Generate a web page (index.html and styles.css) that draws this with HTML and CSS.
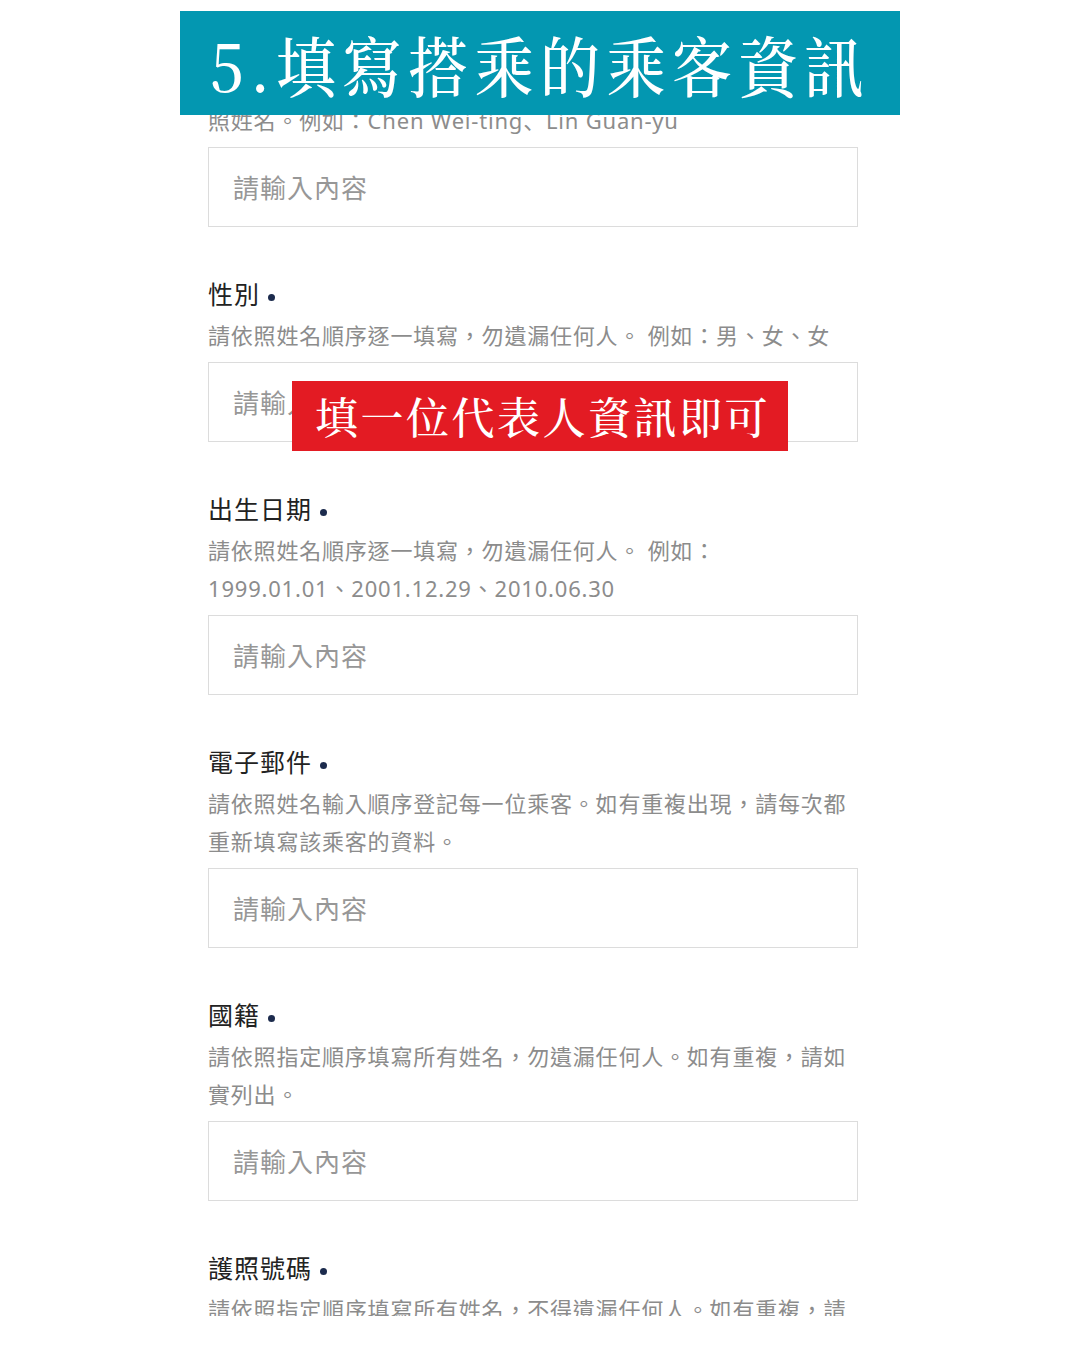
FILE: index.html
```html
<!DOCTYPE html>
<html lang="zh-Hant">
<head>
  <meta charset="UTF-8" />
  <meta name="viewport" content="width=device-width, initial-scale=1.0"/>
  <title>填寫搭乘的乘客資訊</title>
  <link rel="stylesheet" href="styles.css">
</head>
<body>

  <div class="screen">
    <h1 class="step-title"><span>5.填寫搭乘的乘客資訊</span></h1>

    <div class="note">填一位代表人資訊即可</div>

    <form class="passenger-form">
      <div class="field">
        <label class="field-label">英文姓名<span class="req"></span></label>
        <p class="field-help">請依照護照上的英文拼音，依乘客順序逐一填寫所有人的護<br>照姓名。例如：Chen Wei-ting、Lin Guan-yu</p>
        <div class="field-input">請輸入內容</div>
      </div>

      <div class="field">
        <label class="field-label">性別<span class="req"></span></label>
        <p class="field-help">請依照姓名順序逐一填寫，勿遺漏任何人。 例如：男、女、女</p>
        <div class="field-input">請輸入內容</div>
      </div>

      <div class="field">
        <label class="field-label">出生日期<span class="req"></span></label>
        <p class="field-help">請依照姓名順序逐一填寫，勿遺漏任何人。 例如：<br>1999.01.01、2001.12.29、2010.06.30</p>
        <div class="field-input">請輸入內容</div>
      </div>

      <div class="field">
        <label class="field-label">電子郵件<span class="req"></span></label>
        <p class="field-help">請依照姓名輸入順序登記每一位乘客。如有重複出現，請每次都<br>重新填寫該乘客的資料。</p>
        <div class="field-input">請輸入內容</div>
      </div>

      <div class="field">
        <label class="field-label">國籍<span class="req"></span></label>
        <p class="field-help">請依照指定順序填寫所有姓名，勿遺漏任何人。如有重複，請如<br>實列出。</p>
        <div class="field-input">請輸入內容</div>
      </div>

      <div class="field">
        <label class="field-label">護照號碼<span class="req"></span></label>
        <p class="field-help">請依照指定順序填寫所有姓名，不得遺漏任何人。如有重複，請<br>如實列出。</p>
        <div class="field-input">請輸入內容</div>
      </div>
    </form>
  </div>

</body>
</html>
```

FILE: styles.css
```css
body {
  margin: 0;
  background: #ffffff;
  font-family: "Noto Sans", "Noto Sans CJK JP", sans-serif;
}

.screen {
  position: relative;
  width: 720px;
  height: 1316px;
  margin: 0 auto;
  padding: 22px 42px 0 28px;
  box-sizing: border-box;
  overflow: hidden;
}

/* teal step banner across the top */
.step-title {
  position: absolute;
  top: 11px;
  left: 0;
  width: 720px;
  height: 104px;
  margin: 0;
  background: #0397b1;
  color: #ffffff;
  font-family: "Noto Serif CJK TC", "Noto Sans CJK TC", serif;
  font-weight: 500;
  font-size: 60px;
  letter-spacing: 6px;
  line-height: 104px;
  padding-left: 30px;
  box-sizing: border-box;
  z-index: 2;
}

.step-title span {
  display: inline-block;
  transform: scaleY(1.1);
}

/* red sticker over the gender input */
.note {
  position: absolute;
  top: 381px;
  left: 112px;
  width: 496px;
  height: 70px;
  background: #e31b23;
  color: #ffffff;
  font-family: "Noto Serif CJK TC", "Noto Sans CJK TC", serif;
  font-weight: 500;
  font-size: 43px;
  letter-spacing: 2.5px;
  line-height: 70px;
  padding-left: 23px;
  box-sizing: border-box;
  z-index: 2;
}

.passenger-form {
  display: flex;
  flex-direction: column;
  gap: 48px;
}

.field {
  display: flex;
  flex-direction: column;
}

.field-label {
  font-family: "Noto Sans CJK TC", sans-serif;
  font-size: 25px;
  line-height: 36px;
  letter-spacing: 1px;
  color: #222222;
}

/* required marker */
.req {
  display: inline-block;
  width: 7px;
  height: 7px;
  margin-left: 8px;
  border-radius: 50%;
  background: #1c2b4d;
  vertical-align: middle;
}

.field-help {
  margin: 5px 0 8px;
  font-size: 22px;
  line-height: 38px;
  letter-spacing: 0.8px;
  color: #8c8c8c;
}

.field-input {
  height: 80px;
  border: 1.5px solid #dcdcdc;
  box-sizing: border-box;
  padding-left: 24px;
  font-family: "Noto Sans CJK TC", sans-serif;
  font-size: 26px;
  line-height: 77px;
  letter-spacing: 1px;
  color: #979797;
}
```
